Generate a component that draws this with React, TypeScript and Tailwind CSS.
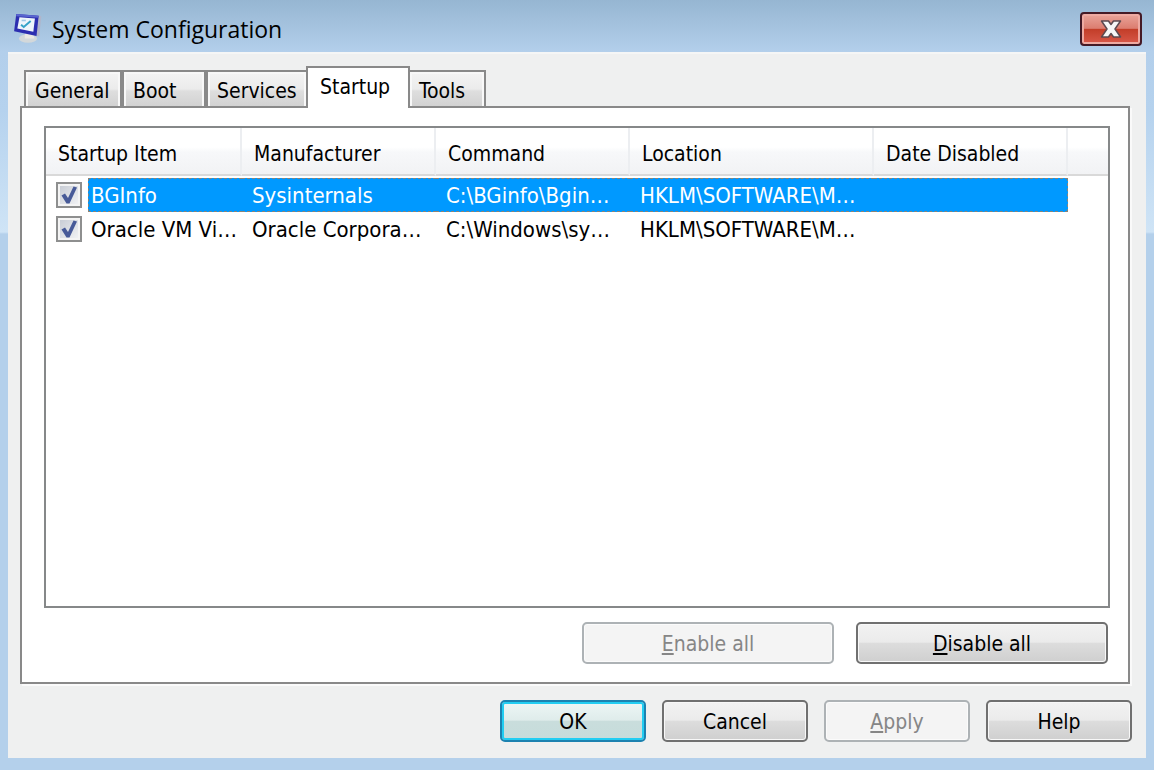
import React, { useState } from 'react';
import clsx from 'clsx';

interface StartupItem {
  id: string;
  name: string;
  manufacturer: string;
  command: string;
  location: string;
  disabledAt: string;
  enabled: boolean;
}

const TABS = [
  { label: 'General', width: 'w-[98px]' },
  { label: 'Boot', width: 'w-[84px]' },
  { label: 'Services', width: 'w-[102px]' },
  { label: 'Startup', width: 'w-[104px]' },
  { label: 'Tools', width: 'w-[78px]' },
];

const COLUMNS = [
  { label: 'Startup Item', width: 'w-[196px]' },
  { label: 'Manufacturer', width: 'w-[194px]' },
  { label: 'Command', width: 'w-[194px]' },
  { label: 'Location', width: 'w-[244px]' },
  { label: 'Date Disabled', width: 'w-[194px]' },
];

const INITIAL_ITEMS: StartupItem[] = [
  {
    id: 'bginfo',
    name: 'BGInfo',
    manufacturer: 'Sysinternals',
    command: 'C:\\BGinfo\\Bgin…',
    location: 'HKLM\\SOFTWARE\\M…',
    disabledAt: '',
    enabled: true,
  },
  {
    id: 'oracle-vm',
    name: 'Oracle VM Vi…',
    manufacturer: 'Oracle Corpora…',
    command: 'C:\\Windows\\sy…',
    location: 'HKLM\\SOFTWARE\\M…',
    disabledAt: '',
    enabled: true,
  },
];

const App: React.FC = () => {
  const [activeTab, setActiveTab] = useState('Startup');
  const [items, setItems] = useState(INITIAL_ITEMS);
  const [selectedId, setSelectedId] = useState('bginfo');

  const toggleItem = (id: string) => {
    setItems(prev => prev.map(i => i.id === id ? { ...i, enabled: !i.enabled } : i));
  };

  const setAll = (enabled: boolean) => {
    setItems(prev => prev.map(i => ({ ...i, enabled })));
  };

  return (
    <div className="flex min-h-screen flex-col bg-[linear-gradient(to_bottom,#96b6d2_0px,#b3cfeb_52px,#b5d2ee_110px,#cfe4f6_232px,#b4d0eb_234px)] px-2 pb-3 font-['DejaVu_Sans_Condensed','DejaVu_Sans',sans-serif] text-[21px] leading-7 text-black">
      <header className="flex h-[52px] items-center justify-between px-1 pt-[6px]">
        <div className="flex items-center gap-2">
          <AppIcon />
          <h1 className="font-['Open_Sans',sans-serif] text-[23px]">System Configuration</h1>
        </div>
        <button
          type="button"
          aria-label="Close"
          className="flex h-[34px] w-[62px] items-center justify-center rounded-[4px] border-2 border-[#451a26] bg-[linear-gradient(to_bottom,#e9a59b_0%,#dc7d70_48%,#c23d28_50%,#d9594a_100%)] shadow-[inset_0_0_0_2px_#eeaaa2]"
        >
          <CloseGlyph />
        </button>
      </header>

      <main className="flex flex-1 flex-col border-t-2 border-[#f5f6f6] bg-[#eff0f0] pb-4 pl-3 pr-4 pt-3">
        <div role="tablist" aria-label="Settings" className="relative z-10 flex h-10 items-end pl-1">
          {TABS.map(tab => {
            const active = tab.label === activeTab;
            return (
              <button
                key={tab.label}
                type="button"
                role="tab"
                aria-selected={active}
                onClick={() => setActiveTab(tab.label)}
                className={clsx(
                  'border-2 border-b-0 border-[#898989] text-left',
                  tab.width,
                  active
                    ? 'relative z-10 -mx-[2px] -mb-[2px] h-[42px] bg-white pb-[2px] pl-3'
                    : 'h-9 bg-[linear-gradient(to_bottom,#f4f4f4_0%,#ebebeb_50%,#dedede_56%,#d2d2d2_100%)] pl-[9px] pt-1 shadow-[inset_2px_2px_0_#f8f8f8,inset_-2px_0_0_#f8f8f8]'
                )}
              >
                {tab.label}
              </button>
            );
          })}
        </div>

        <section
          role="tabpanel"
          aria-label={activeTab}
          className="flex flex-1 flex-col gap-[14px] border-2 border-[#898989] bg-white py-[18px] pl-[22px] pr-[18px] shadow-[2px_2px_0_#fafafa]"
        >
          <div className="flex-1 border-2 border-[#868889] bg-white">
            <table className="w-full table-fixed border-separate border-spacing-0 text-left">
              <thead>
                <tr className="h-12 bg-[linear-gradient(to_bottom,#ffffff_0%,#ffffff_40%,#f7f8fa_50%,#f1f2f4_100%)]">
                  {COLUMNS.map(column => (
                    <th
                      key={column.label}
                      className={clsx('border-b-2 border-r-2 border-b-[#d9d9d9] border-r-[#eceef1] pl-3 pt-[6px] font-normal', column.width)}
                    >
                      {column.label}
                    </th>
                  ))}
                  <th className="border-b-2 border-[#d9d9d9]" />
                </tr>
              </thead>
              <tbody className="text-[22px]">
                <tr className="h-[2px]" />
                {items.map(item => (
                  <StartupRow
                    key={item.id}
                    item={item}
                    selected={item.id === selectedId}
                    onSelect={() => setSelectedId(item.id)}
                    onToggle={() => toggleItem(item.id)}
                  />
                ))}
              </tbody>
            </table>
          </div>

          <div className="flex justify-end gap-[22px] pr-[2px]">
            <DialogButton className="w-[252px]" disabled={items.every(i => i.enabled)} onClick={() => setAll(true)}>
              <u className="underline-offset-2">E</u>nable all
            </DialogButton>
            <DialogButton className="w-[252px]" disabled={items.every(i => !i.enabled)} onClick={() => setAll(false)}>
              <u className="underline-offset-2">D</u>isable all
            </DialogButton>
          </div>
        </section>

        <footer className="-mr-[2px] mt-4 flex justify-end gap-4">
          <DialogButton className="w-[146px]" primary>OK</DialogButton>
          <DialogButton className="w-[146px]">Cancel</DialogButton>
          <DialogButton className="w-[146px]" disabled>
            <u className="underline-offset-2">A</u>pply
          </DialogButton>
          <DialogButton className="w-[146px]">Help</DialogButton>
        </footer>
      </main>
    </div>
  );
};

interface RowProps {
  item: StartupItem;
  selected: boolean;
  onSelect: () => void;
  onToggle: () => void;
}

const StartupRow: React.FC<RowProps> = ({ item, selected, onSelect, onToggle }) => {
  const cell = clsx(
    'h-[34px] whitespace-nowrap border-y border-dashed pb-0 pt-[2px] leading-[30px]',
    selected ? 'border-[#8a8378] bg-[#0099ff] text-white' : 'border-transparent'
  );

  return (
    <tr onClick={onSelect}>
      <td className="p-0">
        <div className="flex items-center gap-[6px] pl-[10px]">
          <span className="grid shrink-0">
            <input
              id={item.id}
              type="checkbox"
              checked={item.enabled}
              onChange={onToggle}
              className="peer col-start-1 row-start-1 size-[26px] appearance-none border-2 border-[#8e8f8f] bg-[linear-gradient(135deg,#c4c9d2,#f4f5f7)] shadow-[inset_0_0_0_2px_#f4f4f4]"
            />
            <svg viewBox="0 0 26 26" className="pointer-events-none invisible col-start-1 row-start-1 size-[26px] peer-checked:visible" aria-hidden="true">
              <path d="M5.500 13.500 9 11.500l3 4.500L17.500 4.500l3.500 1-7.500 16h-3z" fill="#475a98" />
            </svg>
          </span>
          <label htmlFor={item.id} className={clsx('flex-1 border-l pl-[2px]', cell)}>{item.name}</label>
        </div>
      </td>
      <td className={clsx('pl-[10px]', cell)}>{item.manufacturer}</td>
      <td className={clsx('pl-[10px]', cell)}>{item.command}</td>
      <td className={clsx('pl-[10px]', cell)}>{item.location}</td>
      <td className={clsx('border-r pl-[10px]', cell)}>{item.disabledAt}</td>
      <td />
    </tr>
  );
};

interface DialogButtonProps extends React.ButtonHTMLAttributes<HTMLButtonElement> {
  primary?: boolean;
}

const DialogButton: React.FC<DialogButtonProps> = ({ primary, disabled, className, children, ...rest }) => (
  <button
    type="button"
    disabled={disabled}
    className={clsx(
      'h-[42px] rounded-[5px] border-2 pt-[2px]',
      disabled && 'border-[#adb2b5] bg-[#f4f4f4] text-[#868686] shadow-[inset_0_0_0_1px_#fbfbfb]',
      !disabled && primary && 'border-[#1c82b0] bg-[linear-gradient(to_bottom,#edf6f5_0%,#dfeceb_48%,#c9dddc_50%,#c6dcdb_100%)] shadow-[inset_0_0_0_2px_#22cdf2]',
      !disabled && !primary && 'border-[#707070] bg-[linear-gradient(to_bottom,#f2f2f2_0%,#ebebeb_48%,#dddddd_50%,#cfcfcf_100%)] shadow-[inset_0_0_0_1px_#f8f8f8]',
      className
    )}
    {...rest}
  >
    {children}
  </button>
);

// Tilted monitor with a check mark on its screen
const AppIcon: React.FC = () => (
  <svg width="32" height="32" viewBox="0 0 30 30" aria-hidden="true">
    <ellipse cx="15" cy="24" rx="8.500" ry="4" fill="#d3d8da" />
    <path d="M12 19h8l1 5h-9z" fill="#e9e8e3" />
    <path d="M24 2l3.500 1-2 19-3.500-1z" fill="#b0b5ca" />
    <path d="M4 1l21 1.500-2 19L2 17z" fill="#2c2eb0" />
    <path d="M4 1l21 1.500-.3 2L4 3z" fill="#5a66d0" />
    <path d="M7 4l14.500 1.200-1.500 12.300L5 14.500z" fill="#eef5fb" />
    <path d="M8.500 11l2.500 2.200 6.500-5.700" fill="none" stroke="#35a3c8" strokeWidth="1.800" />
    <path d="M9 7h4" stroke="#9fc9e6" strokeWidth="1.500" />
  </svg>
);

const CloseGlyph: React.FC = () => (
  <svg width="24" height="20" viewBox="0 0 24 20" aria-hidden="true">
    <path
      d="M2.500 2h7l2.500 3.500L14.500 2h7L16 10l5.500 8h-7L12 14.500 9.500 18h-7L8 10z"
      fill="#f6f6f6"
      stroke="#5d4a50"
      strokeWidth="1.500"
      strokeLinejoin="round"
    />
  </svg>
);

export default App;
